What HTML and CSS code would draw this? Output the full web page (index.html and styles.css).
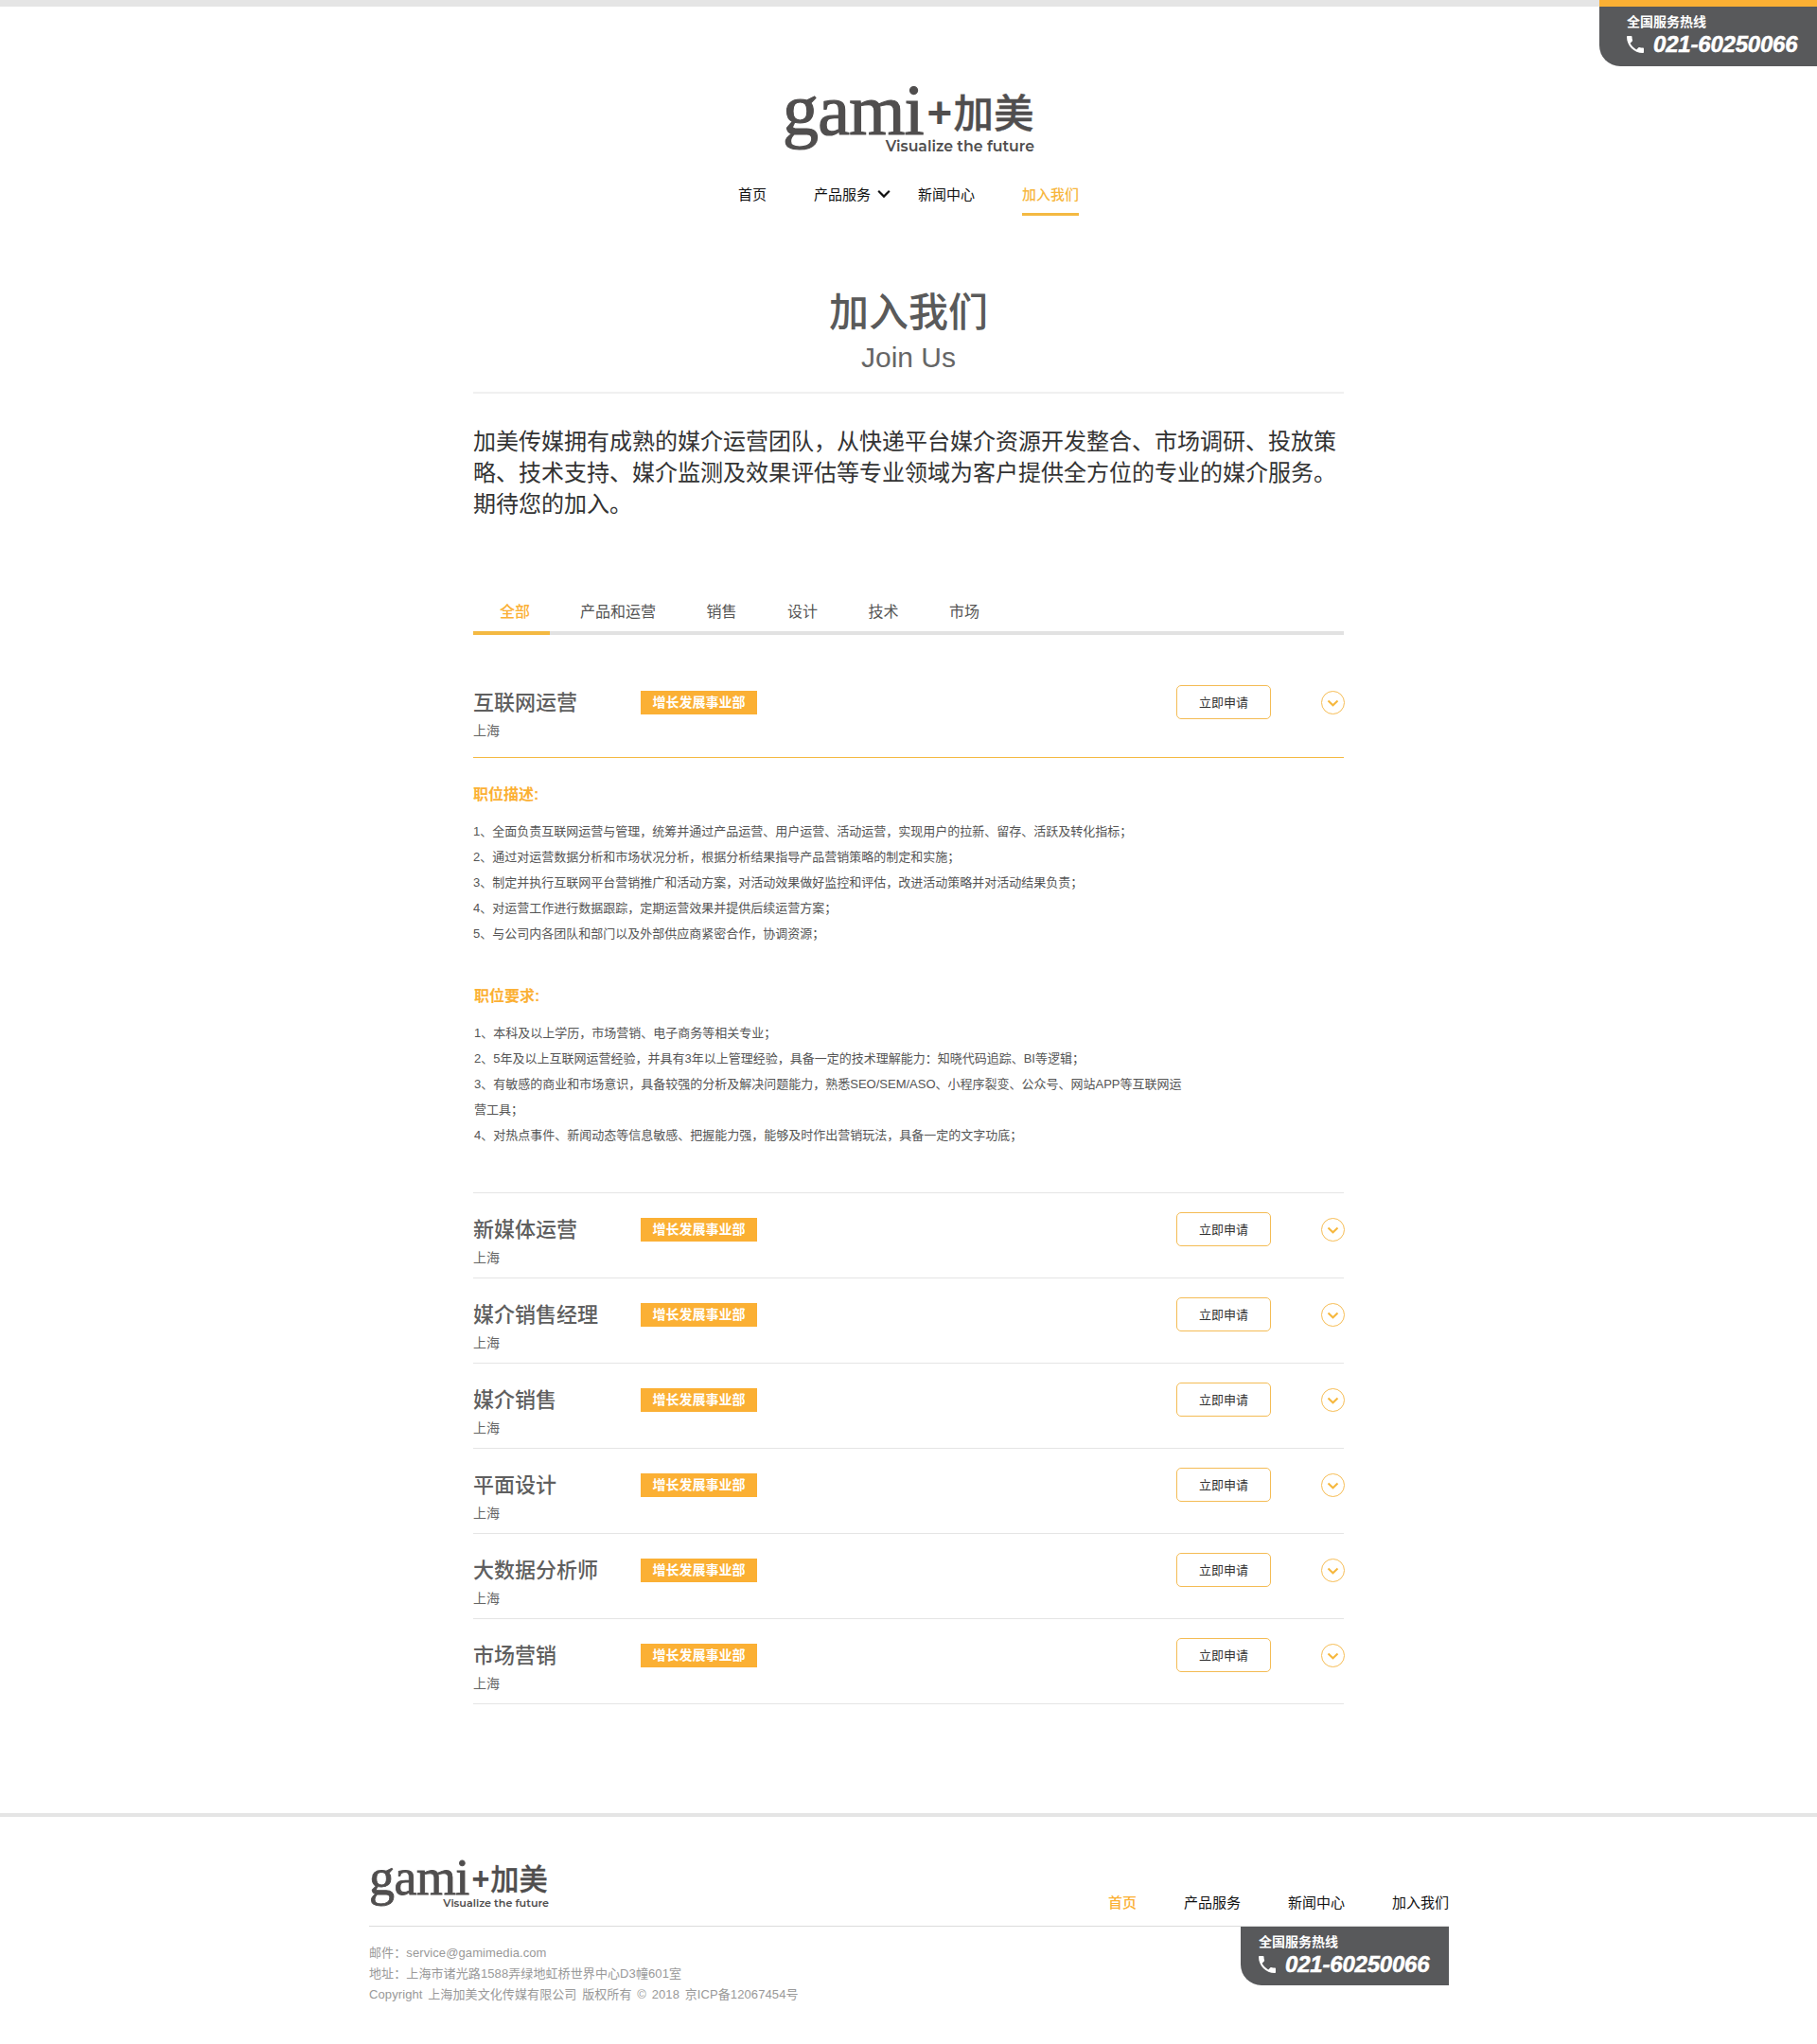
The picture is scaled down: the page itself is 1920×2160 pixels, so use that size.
FILE: index.html
```html
<!DOCTYPE html>
<html lang="zh-CN">
<head>
  <meta charset="UTF-8" />
  <meta name="viewport" content="width=device-width, initial-scale=1.0"/>
  <title>加入我们 - gami+加美</title>
  <link rel="stylesheet" href="styles.css">
</head>
<body>
  <svg class="sprite" aria-hidden="true">
    <symbol id="icon-phone" viewBox="3 3 18 18"><path d="M6.62 10.79c1.44 2.83 3.76 5.14 6.59 6.59l2.2-2.2c.27-.27.67-.36 1.02-.24 1.12.37 2.33.57 3.57.57.55 0 1 .45 1 1V20c0 .55-.45 1-1 1-9.39 0-17-7.61-17-17 0-.55.45-1 1-1h3.5c.55 0 1 .45 1 1 0 1.25.2 2.45.57 3.57.11.35.03.74-.25 1.02l-2.2 2.2z"/></symbol>
    <symbol id="icon-toggle" viewBox="0 0 25 25"><circle cx="12.5" cy="12.5" r="12" fill="none" stroke="#f6bd55" stroke-width="1"/><path d="M7.5 10.5l5 4.8 5-4.8" fill="none" stroke="#f6b73c" stroke-width="2"/></symbol>
  </svg>

  <header class="header">
    <div class="hotline hotline-top">
      <div class="hotline-label">全国服务热线</div>
      <div class="hotline-number"><svg class="phone-icon"><use href="#icon-phone"/></svg><span>021-60250066</span></div>
    </div>
    <div class="logo">
      <div class="logo-mark"><span class="logo-word">gami</span><span class="logo-plus">+</span><span class="logo-cn">加美</span></div>
      <div class="logo-tag">Visualize the future</div>
    </div>
    <nav class="nav-links">
      <a href="#">首页</a>
      <a href="#" class="nav-more">产品服务<svg class="nav-chevron" viewBox="0 0 14 10"><path d="M1.2 1.8L7 7.6l5.8-5.8" fill="none" stroke="#111" stroke-width="2.2"/></svg></a>
      <a href="#">新闻中心</a>
      <a href="#" class="active">加入我们</a>
    </nav>
  </header>

  <main class="join-section">
    <h1 class="page-title">加入我们</h1>
    <h2 class="page-subtitle">Join Us</h2>
    <p class="intro">加美传媒拥有成熟的媒介运营团队，从快递平台媒介资源开发整合、市场调研、投放策略、技术支持、媒介监测及效果评估等专业领域为客户提供全方位的专业的媒介服务。期待您的加入。</p>

    <div class="tabs">
      <a href="#" class="tab active">全部</a>
      <a href="#" class="tab">产品和运营</a>
      <a href="#" class="tab">销售</a>
      <a href="#" class="tab">设计</a>
      <a href="#" class="tab">技术</a>
      <a href="#" class="tab">市场</a>
    </div>

    <div class="job open">
      <div class="job-head">
        <div class="job-title">互联网运营</div>
        <span class="job-tag">增长发展事业部</span>
        <a href="#" class="apply-btn">立即申请</a>
        <svg class="job-toggle"><use href="#icon-toggle"/></svg>
      </div>
      <div class="job-city">上海</div>
    </div>
    <div class="job-detail">
      <h3>职位描述:</h3>
      <ul>
        <li>1、全面负责互联网运营与管理，统筹并通过产品运营、用户运营、活动运营，实现用户的拉新、留存、活跃及转化指标；</li>
        <li>2、通过对运营数据分析和市场状况分析，根据分析结果指导产品营销策略的制定和实施；</li>
        <li>3、制定并执行互联网平台营销推广和活动方案，对活动效果做好监控和评估，改进活动策略并对活动结果负责；</li>
        <li>4、对运营工作进行数据跟踪，定期运营效果并提供后续运营方案；</li>
        <li>5、与公司内各团队和部门以及外部供应商紧密合作，协调资源；</li>
      </ul>
      <h3>职位要求:</h3>
      <ul>
        <li>1、本科及以上学历，市场营销、电子商务等相关专业；</li>
        <li>2、5年及以上互联网运营经验，并具有3年以上管理经验，具备一定的技术理解能力：知晓代码追踪、BI等逻辑；</li>
        <li>3、有敏感的商业和市场意识，具备较强的分析及解决问题能力，熟悉SEO/SEM/ASO、小程序裂变、公众号、网站APP等互联网运营工具；</li>
        <li>4、对热点事件、新闻动态等信息敏感、把握能力强，能够及时作出营销玩法，具备一定的文字功底；</li>
      </ul>
    </div>

    <div class="job">
      <div class="job-head">
        <div class="job-title">新媒体运营</div>
        <span class="job-tag">增长发展事业部</span>
        <a href="#" class="apply-btn">立即申请</a>
        <svg class="job-toggle"><use href="#icon-toggle"/></svg>
      </div>
      <div class="job-city">上海</div>
    </div>
    <div class="job">
      <div class="job-head">
        <div class="job-title">媒介销售经理</div>
        <span class="job-tag">增长发展事业部</span>
        <a href="#" class="apply-btn">立即申请</a>
        <svg class="job-toggle"><use href="#icon-toggle"/></svg>
      </div>
      <div class="job-city">上海</div>
    </div>
    <div class="job">
      <div class="job-head">
        <div class="job-title">媒介销售</div>
        <span class="job-tag">增长发展事业部</span>
        <a href="#" class="apply-btn">立即申请</a>
        <svg class="job-toggle"><use href="#icon-toggle"/></svg>
      </div>
      <div class="job-city">上海</div>
    </div>
    <div class="job">
      <div class="job-head">
        <div class="job-title">平面设计</div>
        <span class="job-tag">增长发展事业部</span>
        <a href="#" class="apply-btn">立即申请</a>
        <svg class="job-toggle"><use href="#icon-toggle"/></svg>
      </div>
      <div class="job-city">上海</div>
    </div>
    <div class="job">
      <div class="job-head">
        <div class="job-title">大数据分析师</div>
        <span class="job-tag">增长发展事业部</span>
        <a href="#" class="apply-btn">立即申请</a>
        <svg class="job-toggle"><use href="#icon-toggle"/></svg>
      </div>
      <div class="job-city">上海</div>
    </div>
    <div class="job">
      <div class="job-head">
        <div class="job-title">市场营销</div>
        <span class="job-tag">增长发展事业部</span>
        <a href="#" class="apply-btn">立即申请</a>
        <svg class="job-toggle"><use href="#icon-toggle"/></svg>
      </div>
      <div class="job-city">上海</div>
    </div>
  </main>

  <footer class="footer">
    <div class="footer-top">
      <div class="logo logo-small">
        <div class="logo-mark"><span class="logo-word">gami</span><span class="logo-plus">+</span><span class="logo-cn">加美</span></div>
        <div class="logo-tag">Visualize the future</div>
      </div>
      <nav class="footer-nav">
        <a href="#" class="active">首页</a>
        <a href="#">产品服务</a>
        <a href="#">新闻中心</a>
        <a href="#">加入我们</a>
      </nav>
    </div>
    <div class="footer-bottom">
      <div class="footer-info">
        <div>邮件：service@gamimedia.com</div>
        <div>地址：上海市诸光路1588弄绿地虹桥世界中心D3幢601室</div>
        <div>Copyright 上海加美文化传媒有限公司 版权所有 © 2018 京ICP备12067454号</div>
      </div>
      <div class="hotline hotline-footer">
        <div class="hotline-label">全国服务热线</div>
        <div class="hotline-number"><svg class="phone-icon"><use href="#icon-phone"/></svg><span>021-60250066</span></div>
      </div>
    </div>
  </footer>
</body>
</html>
```

FILE: styles.css
```css
* {
  box-sizing: border-box;
}
body {
  margin: 0;
  padding: 0;
  background: #fff;
  border-top: 7px solid #e5e5e5;
  font-family: "Liberation Sans", "Noto Sans CJK SC", sans-serif;
  color: #555;
}
a {
  text-decoration: none;
}
.sprite {
  position: absolute;
  width: 0;
  height: 0;
}

/* header */
.header {
  padding-top: 71px;
}
.logo {
  display: flex;
  flex-direction: column;
  align-items: flex-end;
  width: 266px;
  height: 113px;
  margin: 0 auto;
  font-size: 76px;
  color: #504e4e;
}
.logo-mark {
  display: flex;
  align-items: baseline;
  width: 100%;
  line-height: 1;
  white-space: nowrap;
}
.logo-word {
  font-family: "Liberation Serif", serif;
  letter-spacing: -0.01em;
  -webkit-text-stroke: 0.016em #504e4e;
}
.logo-plus {
  margin-left: 0.08em;
  font-size: 0.6em;
  font-weight: 700;
  transform: translateY(-0.15em);
}
.logo-cn {
  margin-left: 0.03em;
  font-family: "Noto Sans CJK SC", sans-serif;
  font-size: 0.56em;
  font-weight: 500;
  transform: translateY(-0.16em);
  -webkit-text-stroke: 0.01em #504e4e;
}
.logo-tag {
  margin-top: -0.55em;
  font-family: "Montserrat", "Open Sans", sans-serif;
  font-size: 0.207em;
  font-weight: 600;
  line-height: 1.3;
  white-space: nowrap;
}
.nav-links {
  display: flex;
  justify-content: center;
  gap: 50px;
}
.nav-links a {
  display: flex;
  align-items: center;
  height: 37px;
  padding-bottom: 8px;
  border-bottom: 3px solid transparent;
  color: #111;
  font-size: 15px;
}
.nav-links a.active {
  color: #f7b73f;
  font-weight: 500;
  border-bottom-color: #f4b942;
}
.nav-more {
  margin-right: -21px;
}
.nav-chevron {
  width: 14px;
  height: 10px;
  margin: 2px 0 0 7px;
}

/* top right hotline */
.hotline {
  background: #58595b;
  color: #fff;
  border-bottom-left-radius: 22px;
}
.hotline-top {
  position: absolute;
  top: 0;
  right: 0;
  width: 230px;
  height: 70px;
  padding: 7px 0 0 29px;
  border-top: 7px solid #fbb034;
}
.hotline-label {
  font-size: 14px;
  font-weight: 700;
  line-height: 18px;
}
.hotline-number {
  display: flex;
  align-items: center;
  height: 30px;
  font-size: 24px;
  font-weight: 700;
  font-style: italic;
  letter-spacing: -0.2px;
  -webkit-text-stroke: 0.5px #fff;
}
.phone-icon {
  width: 18px;
  height: 18px;
  margin-right: 10px;
  fill: #fff;
}

/* page content */
.join-section {
  width: 920px;
  margin: 0 auto;
}
.page-title {
  margin: 75px 0 -1px;
  color: #5a5a5a;
  font-size: 42px;
  font-weight: 500;
  line-height: 56px;
  text-align: center;
}
.page-subtitle {
  margin: 0;
  padding-bottom: 16px;
  border-bottom: 2px solid #f0f0f0;
  color: #666;
  font-size: 30px;
  font-weight: 400;
  line-height: 40px;
  text-align: center;
}
.intro {
  margin: 34px 0 0;
  color: #333;
  font-size: 24px;
  line-height: 33px;
}
.tabs {
  display: flex;
  margin-top: 78px;
  border-bottom: 4px solid #e2e2e2;
}
.tab {
  height: 44px;
  margin-bottom: -4px;
  margin-right: 53.5px;
  border-bottom: 4px solid transparent;
  color: #555;
  font-size: 16px;
  line-height: 40px;
}
.tab.active {
  margin-right: 32px;
  padding: 0 21px 0 28px;
  color: #fbb034;
  font-weight: 500;
  border-bottom-color: #f4b942;
}
.job {
  height: 90px;
  padding-top: 20px;
  border-bottom: 1px solid #e5e5e5;
}
.tabs + .job {
  height: 97px;
  margin-top: 33px;
}
.job.open {
  border-bottom-color: #f4b942;
}
.job-head {
  display: flex;
  align-items: center;
  height: 36px;
}
.job-title {
  width: 177px;
  padding-bottom: 5px;
  color: #5f5f5f;
  font-size: 22px;
  font-weight: 500;
}
.job-tag {
  width: 123px;
  height: 25px;
  background: #fbb034;
  color: #fff;
  font-size: 14px;
  font-weight: 700;
  line-height: 25px;
  text-align: center;
}
.apply-btn {
  width: 100px;
  height: 36px;
  margin-left: auto;
  border: 1px solid #f4bc55;
  border-radius: 5px;
  color: #333;
  font-size: 13px;
  line-height: 36px;
  text-align: center;
}
.job-toggle {
  width: 25px;
  height: 25px;
  margin: 0 -1px 0 53px;
}
.job-city {
  margin-top: 2px;
  color: #666;
  font-size: 14px;
  line-height: 20px;
}
.job-detail {
  padding: 25px 0 47px;
  border-bottom: 1px solid #e5e5e5;
}
.job-detail h3 {
  margin: 0;
  color: #fbb034;
  font-size: 16px;
  font-weight: 700;
  line-height: 27px;
}
.job-detail ul {
  width: 760px;
  margin: 12px 0 39px;
  padding: 0;
  list-style: none;
  font-size: 13px;
  line-height: 27px;
}
.job-detail ul:last-child {
  margin-bottom: 0;
}
.job-detail ul + h3, .job-detail ul + h3 + ul {
  margin-left: 1px;
}

/* footer */
.footer {
  margin-top: 115px;
  padding: 0 389px 41px 390px;
  border-top: 4px solid #e5e5e5;
}
.footer-top {
  display: flex;
  justify-content: space-between;
  align-items: flex-end;
  height: 116px;
  padding-bottom: 9px;
  border-bottom: 1px solid #ddd;
}
.logo-small {
  width: 190px;
  height: auto;
  margin: 0 0 7px;
  font-size: 54px;
}
.footer-nav {
  display: flex;
  gap: 50px;
}
.footer-nav a {
  color: #111;
  font-size: 15px;
  line-height: 30px;
}
.footer-nav a.active {
  color: #fbb034;
  font-weight: 500;
}
.footer-bottom {
  display: flex;
  justify-content: space-between;
  align-items: flex-start;
}
.footer-info {
  padding-top: 17px;
  color: #999;
  font-size: 13px;
  line-height: 22px;
  letter-spacing: 0.1px;
  word-spacing: 2px;
}
.hotline-footer {
  width: 220px;
  height: 62px;
  padding: 7px 0 0 19px;
}
```
